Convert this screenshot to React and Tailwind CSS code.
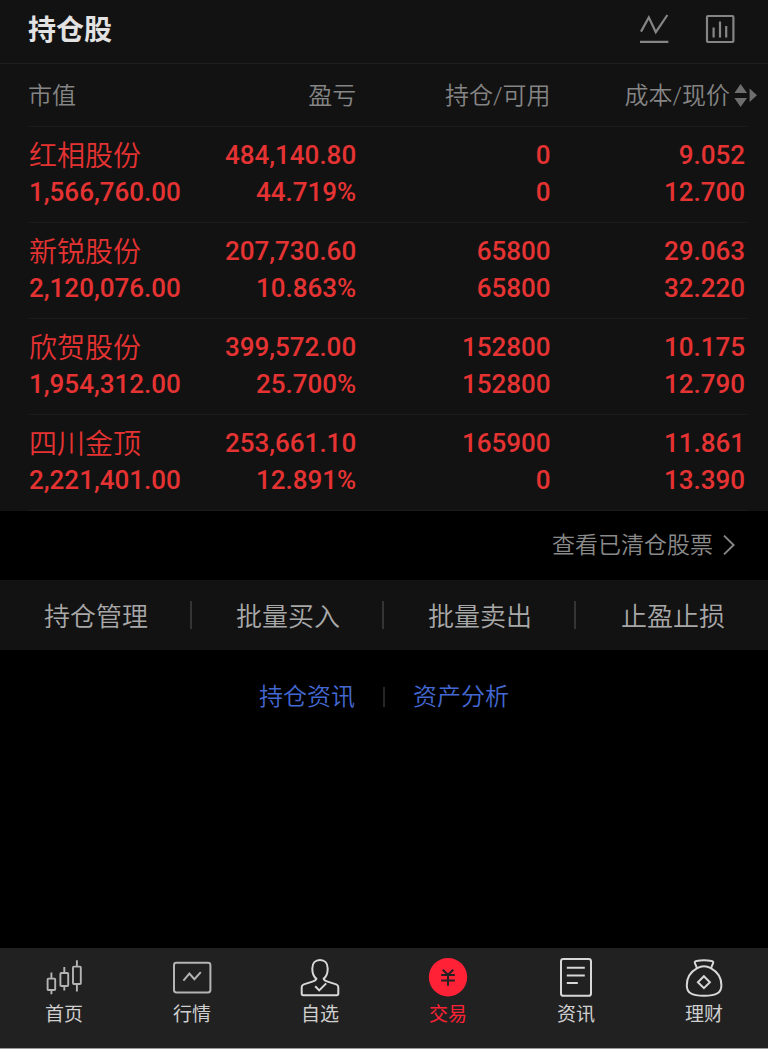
const holdings = [
  { name: "红相股份", value: "1,566,760.00", profit: "484,140.80", rate: "44.719%", held: "0", usable: "0", cost: "9.052", price: "12.700" },
  { name: "新锐股份", value: "2,120,076.00", profit: "207,730.60", rate: "10.863%", held: "65800", usable: "65800", cost: "29.063", price: "32.220" },
  { name: "欣贺股份", value: "1,954,312.00", profit: "399,572.00", rate: "25.700%", held: "152800", usable: "152800", cost: "10.175", price: "12.790" },
  { name: "四川金顶", value: "2,221,401.00", profit: "253,661.10", rate: "12.891%", held: "165900", usable: "0", cost: "11.861", price: "13.390" },
];

const actions = ["持仓管理", "批量买入", "批量卖出", "止盈止损"];

function Icon({ children }) {
  return (
    <svg className="size-10" viewBox="0 0 40 40" fill="none" stroke="currentColor" strokeWidth="2" aria-hidden="true">
      {children}
    </svg>
  );
}

const tabs = [
  {
    label: "首页",
    tone: "text-[#b4b4b4]",
    icon: (
      <Icon>
        <g strokeWidth="1.9">
          <rect x="3.6" y="21.6" width="7.6" height="11.4" rx="0.8" />
          <path d="M7.4 15.5v6M7.4 33v4.3" />
          <rect x="16.4" y="16" width="7.8" height="13" rx="0.8" />
          <path d="M20.3 10v6M20.3 29v4.6" />
          <rect x="29" y="9.6" width="7.8" height="17.4" rx="0.8" />
          <path d="M32.9 3.3v6.3M32.9 27v7.4" />
        </g>
      </Icon>
    ),
  },
  {
    label: "行情",
    tone: "text-[#b4b4b4]",
    icon: (
      <Icon>
        <rect x="2" y="5.8" width="36.4" height="29.6" rx="2.4" />
        <path d="M11.4 23.6l6-7 5 5.6 6.4-7" />
      </Icon>
    ),
  },
  {
    label: "自选",
    tone: "text-[#d8d8d8]",
    icon: (
      <Icon>
        <path
          d="M16.4 21.8C13.6 19.6 12.3 16 12.3 11.4 12.3 6.2 15.4 3 20 3s7.7 3.2 7.7 8.4c0 4.6-1.3 8.2-4.1 10.4.6 1.6 2.2 2.2 4 2.8l8.6 2.8c1.4.5 2.1 1.2 2.1 2.6v6.6c0 1.1-.5 1.6-1.6 1.6H3.3c-1.1 0-1.6-.5-1.6-1.6V30c0-1.4.7-2.1 2.1-2.6l8.6-2.8c1.8-.6 3.4-1.2 4-2.8z"
          strokeLinejoin="round"
        />
        <path d="M15.2 29.2l4 4.2 7-7" />
      </Icon>
    ),
  },
  {
    label: "交易",
    tone: "text-[#ff2236]",
    active: true,
    icon: (
      <Icon>
        <circle cx="20" cy="20.2" r="19.2" fill="currentColor" stroke="none" />
        <path d="M14.8 12.8l5.2 5 5.2-5M13.2 18h13.6M13.2 23.4h13.6M20 17.6v11.2" stroke="#212121" />
      </Icon>
    ),
  },
  {
    label: "资讯",
    tone: "text-[#d8d8d8]",
    icon: (
      <Icon>
        <rect x="5" y="2" width="30" height="36.8" rx="2.4" />
        <path d="M10.8 10.8h18M10.8 18.4h18M10.8 26h11" />
      </Icon>
    ),
  },
  {
    label: "理财",
    tone: "text-[#d8d8d8]",
    icon: (
      <Icon>
        <g strokeLinejoin="round">
          <path d="M13.2 11.6L11 6.4C10.4 5 10.9 4.2 12.4 4c5-.9 10.2-.9 15.2 0 1.5.2 2 1 1.4 2.4l-2.2 5.2" />
          <path d="M13.2 11.2c4.4-2.6 9.2-2.6 13.6 0C33.6 15 37.4 21.6 37.4 28.2c0 7.4-4.6 10.6-17.4 10.6S2.8 35.6 2.8 28.2C2.8 21.6 6.4 15 13.2 11.2z" />
        </g>
        <path d="M19.9 19.2l6 6-6 6-6-6z" />
      </Icon>
    ),
  },
];

const numeric = "pr-[3px] pt-2.5 pb-[11px] text-right";

function Pair({ top, bottom }) {
  return (
    <>
      <div>{top}</div>
      <div>{bottom}</div>
    </>
  );
}

export default function App() {
  return (
    <div className="flex min-h-screen flex-col bg-black font-['Roboto','Noto_Sans_CJK_SC',sans-serif]">
      <section className="bg-[#121212]">
        <header className="flex h-16 items-center justify-between border-b border-[#1f1f1f] pr-[33px] pl-7 pb-1">
          <h1 className="pt-0.5 text-[28px] leading-9 font-bold text-[#e2e2e2]">持仓股</h1>
          <div className="flex gap-9 text-[#858585]">
            <button type="button" aria-label="走势" className="block">
              <svg className="h-8 w-[30px]" viewBox="0 0 30 32" fill="none" stroke="currentColor" strokeWidth="2.2" aria-hidden="true">
                <path d="M2 17.6L9.8 3.4l7 14.8L28.4 1M1 27.9h28.4" />
              </svg>
            </button>
            <button type="button" aria-label="统计" className="block">
              <svg className="h-8 w-[30px]" viewBox="0 0 30 32" fill="none" stroke="currentColor" strokeWidth="2.2" aria-hidden="true">
                <rect x="2" y="2" width="26.4" height="26" rx="1" />
                <path d="M8.6 13.6v10M15 7.4v16.2M21.2 12v11.6" />
              </svg>
            </button>
          </div>
        </header>

        <div className="mr-5 ml-7">
          <table className="w-full table-fixed border-collapse">
            <thead className="text-2xl text-[#858585]">
              <tr className="h-[62px] border-b border-[#1b1b1b]">
                <th scope="col" className="w-[22%] pt-0.5 text-left font-[350]">市值</th>
                <th scope="col" className="w-[24%] pt-0.5 pr-[3px] text-right font-[350]">盈亏</th>
                <th scope="col" className="w-[27%] pt-0.5 pr-[3px] text-right font-[350]">持仓/可用</th>
                <th scope="col" className="w-[27%] pt-0.5 font-[350]">
                  <button type="button" className="-mr-2.5 flex items-center justify-end gap-1 justify-self-end whitespace-nowrap">
                    成本/现价
                    <svg className="h-6 w-6 shrink-0" viewBox="0 0 24 24" fill="#6e6e6e" aria-hidden="true">
                      <path d="M6.6 0l6.4 9H.4zM.4 14H13l-6.4 9zM15.6 4.6l7.4 6.7-7.4 6.7z" />
                    </svg>
                  </button>
                </th>
              </tr>
            </thead>
            <tbody className="text-[26px] leading-[37px] font-medium text-[#e53333]">
              {holdings.map((h) => (
                <tr key={h.name} className="border-b border-[#1b1b1b]">
                  <th scope="row" className="pt-2.5 pb-[11px] pl-px text-left whitespace-nowrap">
                    <div className="pt-[3px] text-[28px] leading-[34px] font-[350]">{h.name}</div>
                    <div className="font-medium">{h.value}</div>
                  </th>
                  <td className={numeric}><Pair top={h.profit} bottom={h.rate} /></td>
                  <td className={numeric}><Pair top={h.held} bottom={h.usable} /></td>
                  <td className={numeric}><Pair top={h.cost} bottom={h.price} /></td>
                </tr>
              ))}
            </tbody>
          </table>
        </div>
      </section>

      <div className="flex h-[69px] items-center justify-end pt-0.5 pr-[31px]">
        <a href="#cleared" className="flex items-center gap-2 text-[23px] leading-8 font-[350] text-[#8a8a8a]">
          查看已清仓股票
          <svg className="h-6 w-4" viewBox="0 0 16 24" fill="none" stroke="#858585" strokeWidth="2" aria-hidden="true">
            <path d="M3 1.6l9.6 9.4L3 20.4" />
          </svg>
        </a>
      </div>

      <div className="grid h-[70px] grid-cols-4 items-center divide-x-2 divide-[#343434] bg-[#121212]">
        {actions.map((label) => (
          <button key={label} type="button" className="h-7 pt-0.5 pl-0.5 text-[26px] leading-7 font-[350] whitespace-nowrap text-[#a8a8a8]">
            {label}
          </button>
        ))}
      </div>

      <div className="flex flex-1 items-start justify-center pt-[31px] text-2xl font-[350] text-[#4468d2]">
        <div className="flex items-center gap-7">
          <a href="#news">持仓资讯</a>
          <span className="h-5 w-0.5 bg-[#262626]" />
          <a href="#analysis">资产分析</a>
        </div>
      </div>

      <nav className="grid h-[101px] grid-cols-6 border-b border-[#9a9a9a] bg-[#212121]">
        {tabs.map((t) => (
          <a
            key={t.label}
            href={"#" + t.label}
            aria-current={t.active ? "page" : undefined}
            className={"flex flex-col items-center gap-1.5 pt-[9px] " + t.tone}
          >
            {t.icon}
            <span className={t.active ? "text-[19px] leading-6" : "text-[19px] leading-6 text-[#cfcfcf]"}>{t.label}</span>
          </a>
        ))}
      </nav>
    </div>
  );
}
